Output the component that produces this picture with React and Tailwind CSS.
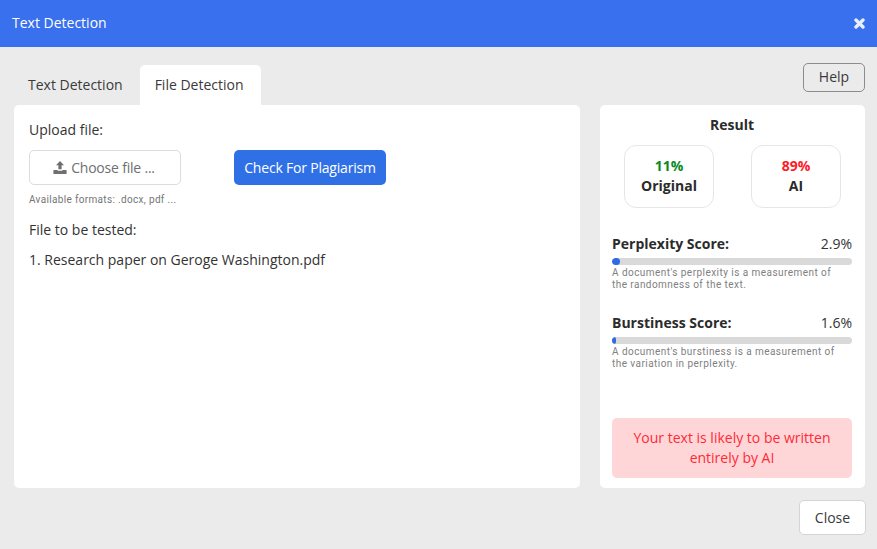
import React from 'react';

const font = { fontFamily: '"Open Sans", sans-serif' };

const ScoreRow = ({title, value, percent, description}) => (
  <div>
    <div className="flex items-center justify-between h-[20px]">
      <span className="text-[14px] font-bold text-[#2b2b2b]">{title}</span>
      <span className="text-[14px] text-[#333333]">{value}</span>
    </div>
    <div className="mt-[5px] h-[7px] rounded-full bg-[#d9d9d9] overflow-hidden">
      <div className="h-full rounded-full bg-[#3069e6]" style={{width: percent}}></div>
    </div>
    <p className="mt-[2px] text-[10px] leading-[12px] text-[#808080] font-['Roboto',sans-serif] tracking-[0.45px]">{description}</p>
  </div>
);

const App = () => {
  return (
    <div className="w-[877px] h-[549px] bg-[#ebebeb] flex flex-col overflow-hidden font-['Open_Sans',sans-serif]" style={font}>
      <header className="h-[47px] shrink-0 bg-[#3870ee] flex items-center justify-between pl-[12px] pr-[12px] pb-[3px]">
        <h1 className="text-[14px] text-white font-normal">Text Detection</h1>
        <svg width="11" height="11" viewBox="0 0 11 11" className="mt-[2px]">
          <path d="M2 2 L9 9 M9 2 L2 9" stroke="#e8eefc" strokeWidth="3.4" strokeLinecap="round"/>
        </svg>
      </header>

      <div className="flex-1 flex flex-col pl-[14px] pr-[12px]">
        <div className="flex justify-between h-[58px] shrink-0">
          <div className="flex items-end">
            <div className="h-[40px] pl-[14px] pr-[17px] pb-[2px] flex items-center text-[14px] text-[#3a3a3a]">Text Detection</div>
            <div className="h-[40px] pl-[15px] pr-[17px] pb-[2px] flex items-center text-[14px] text-[#3a3a3a] bg-white rounded-t-[5px]">File Detection</div>
          </div>
          <button className="mt-[16px] w-[62px] h-[29px] rounded-[5px] border border-[#8c8c8c] pb-[2px] text-[14px] text-[#3a3a3a]">Help</button>
        </div>

        <div className="flex gap-[20px] h-[383px]">
          <section className="w-[566px] bg-white rounded-[5px] pl-[15px] pt-[15px] text-[14px] text-[#333333]">
            <p className="leading-[20px]">Upload file:</p>
            <div className="flex mt-[10px] gap-[53px]">
              <button className="w-[152px] h-[35px] pr-[2px] rounded-[5px] border border-[#dcdcdc] flex items-center justify-center gap-[4px] text-[14px] text-[#6f6f6f] tracking-[-0.2px]">
                <svg width="14" height="13" viewBox="0 0 14 13">
                  <path d="M7 0 L11 4.2 H8.6 V8.2 H5.4 V4.2 H3 Z M1 9 H4.6 V9.8 H9.4 V9 H13 Q13.6 9 13.6 9.6 V12.4 Q13.6 13 13 13 H1 Q0.4 13 0.4 12.4 V9.6 Q0.4 9 1 9 Z" fill="#6f6f6f"/>
                </svg>
                Choose file ...
              </button>
              <button className="w-[152px] h-[35px] rounded-[5px] bg-[#3070e6] text-[14px] text-white tracking-[-0.2px]">Check For Plagiarism</button>
            </div>
            <p className="mt-[7px] text-[10px] leading-[16px] text-[#757575] font-['Roboto',sans-serif] tracking-[0.33px]">Available formats: .docx, pdf ...</p>
            <p className="mt-[12px] leading-[20px]">File to be tested:</p>
            <p className="mt-[10px] leading-[20px]">1. Research paper on Geroge Washington.pdf</p>
          </section>

          <aside className="w-[265px] bg-white rounded-[5px] pl-[12px] pr-[13px] flex flex-col">
            <h2 className="mt-[10px] text-center text-[14px] font-bold leading-[20px] text-[#2b2b2b]">Result</h2>
            <div className="mt-[10px] flex justify-between pl-[12px] pr-[11px]">
              <div className="w-[90px] h-[63px] rounded-[12px] border border-[#e6e6e6] pb-[2px] flex flex-col items-center justify-center">
                <span className="text-[14px] font-bold leading-[20px] text-[#0a8a1f]">11%</span>
                <span className="text-[14px] font-bold leading-[20px] text-[#2b2b2b]">Original</span>
              </div>
              <div className="w-[90px] h-[63px] rounded-[12px] border border-[#e6e6e6] pb-[2px] flex flex-col items-center justify-center">
                <span className="text-[14px] font-bold leading-[20px] text-[#ff1a2a]">89%</span>
                <span className="text-[14px] font-bold leading-[20px] text-[#2b2b2b]">AI</span>
              </div>
            </div>
            <div className="mt-[25px] flex flex-col gap-[21px]">
              <ScoreRow title="Perplexity Score:" value="2.9%" percent="3.4%"
                        description={<>A document's perplexity is a measurement of<br/>the randomness of the text.</>}/>
              <ScoreRow title="Burstiness Score:" value="1.6%" percent="1.7%"
                        description={<>A document's burstiness is a measurement of<br/>the variation in perplexity.</>}/>
            </div>
            <div className="mt-auto mb-[10px] h-[60px] rounded-[5px] bg-[#ffd6d8] flex items-center justify-center text-center text-[14px] leading-[20px] text-[#ff2a36]">
              <p>Your text is likely to be written<br/>entirely by AI</p>
            </div>
          </aside>
        </div>

        <div className="flex justify-end mt-[12px] -mr-[1px]">
          <button className="w-[67px] h-[35px] rounded-[5px] bg-white border border-[#d4d4d4] text-[14px] text-[#3a3a3a]">Close</button>
        </div>
      </div>
    </div>
  );
};

export default App;
